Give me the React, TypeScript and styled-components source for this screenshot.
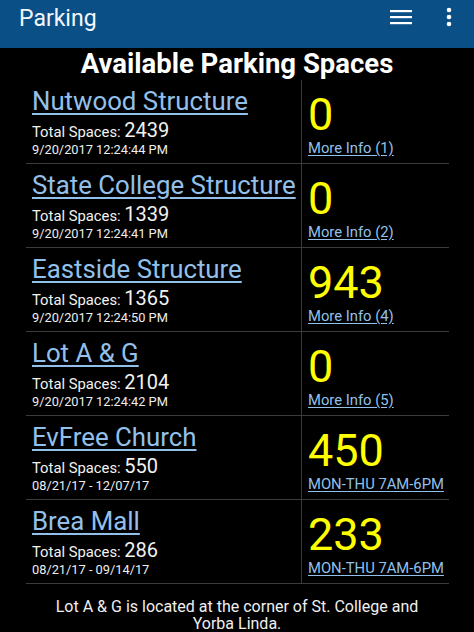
import React from 'react';
import styled, { createGlobalStyle } from 'styled-components';

interface Lot {
  name: string;
  total: number;
  stamp: string;
  available: number;
  info: string;
}

const lots: Lot[] = [
  { name: 'Nutwood Structure', total: 2439, stamp: '9/20/2017 12:24:44 PM', available: 0, info: 'More Info (1)' },
  { name: 'State College Structure', total: 1339, stamp: '9/20/2017 12:24:41 PM', available: 0, info: 'More Info (2)' },
  { name: 'Eastside Structure', total: 1365, stamp: '9/20/2017 12:24:50 PM', available: 943, info: 'More Info (4)' },
  { name: 'Lot A & G', total: 2104, stamp: '9/20/2017 12:24:42 PM', available: 0, info: 'More Info (5)' },
  { name: 'EvFree Church', total: 550, stamp: '08/21/17 - 12/07/17', available: 450, info: 'MON-THU 7AM-6PM' },
  { name: 'Brea Mall', total: 286, stamp: '08/21/17 - 09/14/17', available: 233, info: 'MON-THU 7AM-6PM' },
];

const GlobalStyle = createGlobalStyle`
  html, body {
    margin: 0;
    padding: 0;
    background: #000;
  }
  body {
    font-family: Roboto, "Liberation Sans", sans-serif;
    color: #fff;
  }
`;

const Screen = styled.div`
  width: 474px;
  height: 632px;
  overflow: hidden;
  background: #000;
  display: flex;
  flex-direction: column;
`;

const AppBar = styled.header`
  height: 48px;
  flex-shrink: 0;
  background: #0b4f87;
  display: flex;
  align-items: center;
  padding: 0 22px 0 19px;
  box-sizing: border-box;
`;

const AppTitle = styled.div`
  flex: 1;
  font-size: 23px;
  color: #f4f7fa;
  padding-bottom: 12px;
`;

const BarIcons = styled.div`
  display: flex;
  align-items: center;
  gap: 33px;
  padding-bottom: 14px;
`;

const Heading = styled.h1`
  margin: 0;
  height: 32px;
  line-height: 32px;
  font-size: 27.5px;
  font-weight: bold;
  text-align: center;
  color: #fff;
`;

const Table = styled.div`
  margin: 0 25px 0 26px;
  display: flex;
  flex-direction: column;
`;

const Row = styled.div`
  height: 84px;
  box-sizing: border-box;
  display: grid;
  grid-template-columns: 275px 1fr;
  border-bottom: 1px solid #3c3c3c;
`;

const NameCell = styled.div`
  padding: 7px 0 0 6px;
  display: flex;
  flex-direction: column;
`;

const CountCell = styled.div`
  border-left: 1px solid #3c3c3c;
  padding: 12px 0 0 6px;
  display: flex;
  flex-direction: column;
`;

const LotLink = styled.a`
  font-size: 25.8px;
  line-height: 28px;
  color: #93c0ea;
  text-decoration: underline;
  text-underline-offset: 3px;
  text-decoration-thickness: 2px;
  align-self: flex-start;
  white-space: nowrap;
`;

const TotalLine = styled.div`
  margin-top: 5px;
  font-size: 14.8px;
  line-height: 20px;
  color: #f2f2f2;
`;

const TotalNumber = styled.span`
  font-size: 20px;
  line-height: 1;
`;

const Stamp = styled.div`
  font-size: 12.8px;
  line-height: 16px;
  color: #eeeeee;
`;

const Available = styled.div`
  font-size: 45px;
  line-height: 45px;
  color: #ffff00;
`;

const InfoLink = styled.a`
  margin-top: 2px;
  font-size: 14.8px;
  line-height: 18px;
  color: #93c0ea;
  text-decoration: underline;
  text-underline-offset: 2px;
  align-self: flex-start;
  white-space: nowrap;
`;

const Footer = styled.p`
  margin: 14px 48px 0;
  font-size: 16px;
  line-height: 17px;
  text-align: center;
  color: #f0f0f0;
`;

const MenuIcon = () => (
  <svg width="24" height="18" viewBox="0 0 24 18">
    <rect x="1" y="2" width="22" height="2.2" fill="#fff" />
    <rect x="1" y="8" width="22" height="2.2" fill="#fff" />
    <rect x="1" y="14" width="22" height="2.2" fill="#fff" />
  </svg>
);

const MoreIcon = () => (
  <svg width="6" height="20" viewBox="0 0 6 20">
    <circle cx="3" cy="3" r="2.3" fill="#fff" />
    <circle cx="3" cy="10" r="2.3" fill="#fff" />
    <circle cx="3" cy="17" r="2.3" fill="#fff" />
  </svg>
);

const App = () => (
  <Screen>
    <GlobalStyle />
    <AppBar>
      <AppTitle>Parking</AppTitle>
      <BarIcons>
        <MenuIcon />
        <MoreIcon />
      </BarIcons>
    </AppBar>
    <Heading>Available Parking Spaces</Heading>
    <Table>
      {lots.map(lot => (
        <Row key={lot.name}>
          <NameCell>
            <LotLink href="#">{lot.name}</LotLink>
            <TotalLine>
              Total Spaces: <TotalNumber>{lot.total}</TotalNumber>
            </TotalLine>
            <Stamp>{lot.stamp}</Stamp>
          </NameCell>
          <CountCell>
            <Available>{lot.available}</Available>
            <InfoLink href="#">{lot.info}</InfoLink>
          </CountCell>
        </Row>
      ))}
    </Table>
    <Footer>Lot A &amp; G is located at the corner of St. College and Yorba Linda.</Footer>
  </Screen>
);

export default App;
